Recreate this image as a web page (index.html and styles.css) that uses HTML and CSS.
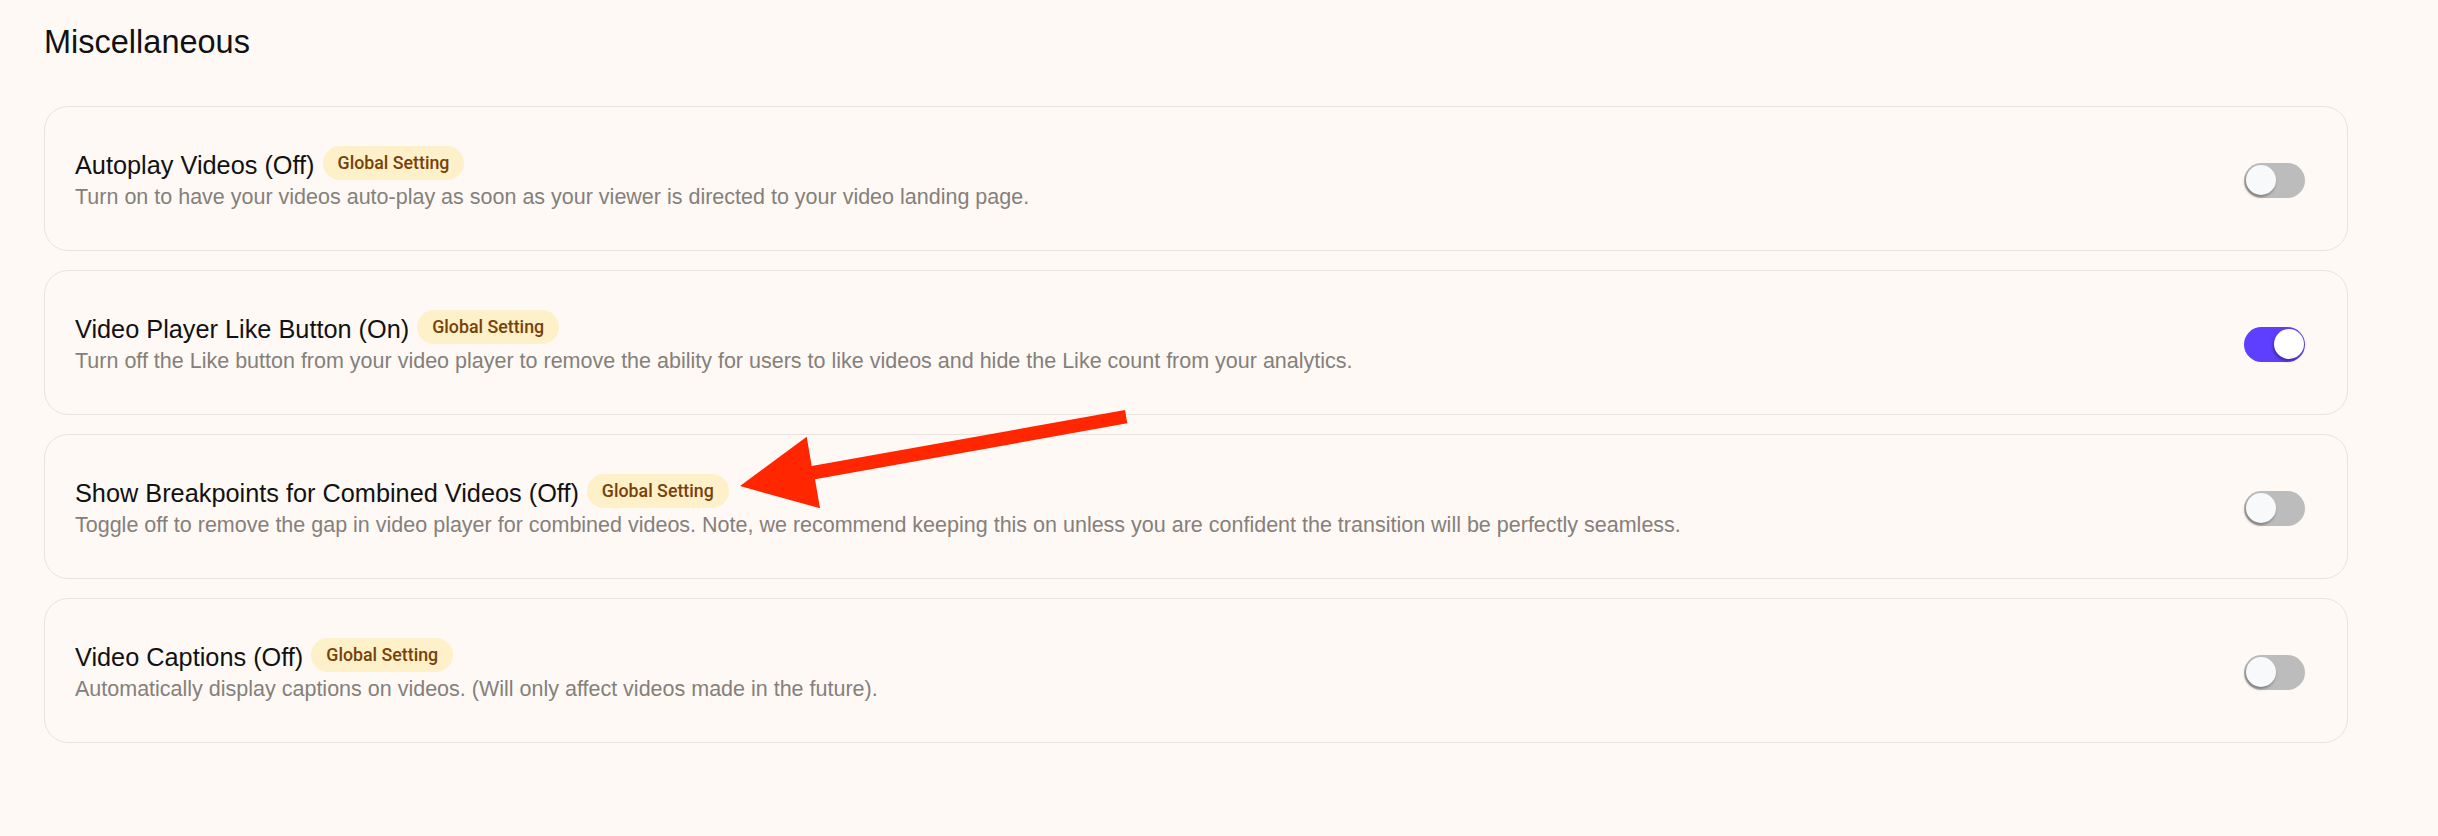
FILE: index.html
```html
<!DOCTYPE html>
<html lang="en">
<head>
    <meta charset="UTF-8">
    <meta name="viewport" content="width=device-width, initial-scale=1.0">
    <title>Miscellaneous settings</title>
    <link rel="stylesheet" href="styles.css">
</head>
<body>
    <main class="settings">
        <h2 class="settings-title">Miscellaneous</h2>
        <div class="setting-list">
            <div class="setting-card">
                <div class="setting-text">
                    <div class="setting-head">
                        <span class="setting-name">Autoplay Videos (Off)</span>
                        <span class="badge">Global Setting</span>
                    </div>
                    <p class="setting-desc">Turn on to have your videos auto-play as soon as your viewer is directed to your video landing page.</p>
                </div>
                <span class="switch" role="switch" aria-checked="false"><span class="knob"></span></span>
            </div>
            <div class="setting-card">
                <div class="setting-text">
                    <div class="setting-head">
                        <span class="setting-name">Video Player Like Button (On)</span>
                        <span class="badge">Global Setting</span>
                    </div>
                    <p class="setting-desc">Turn off the Like button from your video player to remove the ability for users to like videos and hide the Like count from your analytics.</p>
                </div>
                <span class="switch on" role="switch" aria-checked="true"><span class="knob"></span></span>
            </div>
            <div class="setting-card">
                <div class="setting-text">
                    <div class="setting-head">
                        <span class="setting-name">Show Breakpoints for Combined Videos (Off)</span>
                        <span class="badge">Global Setting</span>
                    </div>
                    <p class="setting-desc">Toggle off to remove the gap in video player for combined videos. Note, we recommend keeping this on unless you are confident the transition will be perfectly seamless.</p>
                </div>
                <span class="switch" role="switch" aria-checked="false"><span class="knob"></span></span>
            </div>
            <div class="setting-card">
                <div class="setting-text">
                    <div class="setting-head">
                        <span class="setting-name">Video Captions (Off)</span>
                        <span class="badge">Global Setting</span>
                    </div>
                    <p class="setting-desc">Automatically display captions on videos. (Will only affect videos made in the future).</p>
                </div>
                <span class="switch" role="switch" aria-checked="false"><span class="knob"></span></span>
            </div>
        </div>
    </main>
    <!-- red callout arrow drawn over the page -->
    <svg class="callout" viewBox="0 0 2438 836" aria-hidden="true">
        <polygon points="1125,410 1127.3,423.3 815,479.3 820,508.3 740,486 806.7,436.7 811.7,466" fill="#ff2600"/>
    </svg>
</body>
</html>
```

FILE: styles.css
```css
body {
    position: relative;
    margin: 0;
    background-color: #fef9f5;
    font-family: "Liberation Sans", Arial, sans-serif;
    color: #111;
}
.settings {
    padding: 24px 90px 0 44px;
}
.settings-title {
    margin: 0 0 46px;
    font-size: 32.5px;
    line-height: 36px;
    font-weight: 400;
}
.setting-list {
    display: flex;
    flex-direction: column;
    gap: 19px;
}
.setting-card {
    display: flex;
    align-items: center;
    justify-content: space-between;
    padding: 41px 42px 38px 30px;
    border: 1px solid #e8e3de;
    border-radius: 24px;
    background-color: #fef9f5;
}
.setting-head {
    display: flex;
    align-items: center;
    gap: 8px;
}
.setting-name {
    font-size: 25.3px;
    line-height: 34px;
}
.badge {
    margin-top: -4px;
    padding: 0 15px;
    border-radius: 17px;
    background-color: #fef0c8;
    color: #77420a;
    font-family: Roboto, sans-serif;
    font-weight: 500;
    font-size: 17.8px;
    line-height: 34px;
}
.setting-desc {
    margin: 0;
    font-size: 21.5px;
    line-height: 30px;
    color: #85807b;
}
.switch {
    display: flex;
    align-items: center;
    flex-shrink: 0;
    box-sizing: border-box;
    width: 61px;
    height: 35px;
    padding: 0 1.5px;
    border-radius: 18px;
    background-color: #bcbcbc;
}
.switch.on {
    justify-content: flex-end;
    background-color: #5e3fff;
}
.knob {
    width: 30px;
    height: 30px;
    border-radius: 50%;
    background-color: #f8f9fa;
    box-shadow: -1px 2px 3px rgba(0, 0, 0, 0.35);
}
.switch.on .knob {
    background-color: #fff;
}
.callout {
    position: absolute;
    top: 0;
    left: 0;
    width: 2438px;
    height: 836px;
    pointer-events: none;
}
```
